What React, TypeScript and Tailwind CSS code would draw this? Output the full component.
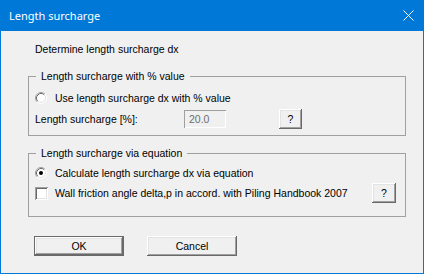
import React from "react";

const raised =
  "shadow-[inset_-1px_-1px_#696969,inset_1px_1px_#ffffff,inset_-2px_-2px_#a0a0a0,inset_2px_2px_#e3e3e3]";

function Radio({ checked }: { checked?: boolean }) {
  return (
    <svg width="12" height="12" viewBox="0 0 12 12" className="shrink-0">
      <circle cx="6" cy="6" r="5" fill="#fff" />
      <path d="M2.11 9.89A5.5 5.5 0 0 1 9.89 2.11" fill="none" stroke="#a0a0a0" />
      <path d="M9.89 2.11A5.5 5.5 0 0 1 2.11 9.89" fill="none" stroke="#ffffff" />
      <path d="M2.82 9.18A4.5 4.5 0 0 1 9.18 2.82" fill="none" stroke="#696969" />
      <path d="M9.18 2.82A4.5 4.5 0 0 1 2.82 9.18" fill="none" stroke="#e3e3e3" />
      {checked && <circle cx="6" cy="6" r="2" fill="#000" />}
    </svg>
  );
}

function HelpButton({ w }: { w: string }) {
  return (
    <button className={`${w} h-[20px] bg-[#f0f0f0] ${raised} flex items-center justify-center`}>
      ?
    </button>
  );
}

export default function App() {
  return (
    <div className="w-[424px] h-[274px] bg-[#f0f0f0] border-x border-b border-[#0078d7] flex flex-col text-[10.5px] leading-[13px] text-black font-['Liberation_Sans',Arial,sans-serif]">
      <div className="h-[31px] shrink-0 bg-[#0078d7] flex items-center justify-between pl-[8px] pr-[9px]">
        <span className="text-white text-[11px] font-['Noto_Sans',sans-serif]">Length surcharge</span>
        <svg width="11" height="11" viewBox="0 0 11 11">
          <path d="M0.5 0.5L10.5 10.5M10.5 0.5L0.5 10.5" stroke="#fff" strokeWidth="1" />
        </svg>
      </div>

      <div className="pl-[27px] pt-[12px] flex flex-col">
        <div className="pl-[7px]">Determine length surcharge dx</div>

        <fieldset className="mt-[14px] w-[378px] border border-[#a0a0a0] pl-[6px] pb-[6px]">
          <legend className="ml-[1px] px-[5px]">Length surcharge with % value</legend>
          <div className="mt-[7px] h-[16px] flex items-center gap-[8px]">
            <Radio />
            <span>Use length surcharge dx with % value</span>
          </div>
          <div className="mt-[3px] h-[20px] flex items-center">
            <span className="w-[149px]">Length surcharge [%]:</span>
            <div className="w-[42px] h-[18px] bg-[#f0f0f0] text-[#6d6d6d] pl-[5px] flex items-center shadow-[inset_1px_1px_#a0a0a0,inset_-1px_-1px_#ffffff]">
              20.0
            </div>
            <div className="ml-[53px]">
              <HelpButton w="w-[23px]" />
            </div>
          </div>
        </fieldset>

        <fieldset className="mt-[11px] w-[378px] border border-[#a0a0a0] pl-[6px] pr-[9px] pb-[13px]">
          <legend className="ml-[1px] px-[5px]">Length surcharge via equation</legend>
          <div className="mt-[5px] h-[16px] flex items-center gap-[8px]">
            <Radio checked />
            <span>Calculate length surcharge dx via equation</span>
          </div>
          <div className="mt-[2px] h-[20px] flex items-center">
            <div className="w-[13px] h-[13px] bg-white shadow-[inset_1px_1px_#a0a0a0,inset_-1px_-1px_#ffffff,inset_2px_2px_#696969,inset_-2px_-2px_#e3e3e3]" />
            <span className="ml-[7px]">Wall friction angle delta,p in accord. with Piling Handbook 2007</span>
            <div className="ml-auto">
              <HelpButton w="w-[24px]" />
            </div>
          </div>
        </fieldset>

        <div className="mt-[19px] ml-[6px] flex gap-[23px]">
          <button className={`w-[90px] h-[20px] border border-[#696969] bg-[#f0f0f0] ${raised}`}>OK</button>
          <button className={`w-[90px] h-[20px] bg-[#f0f0f0] ${raised}`}>Cancel</button>
        </div>
      </div>
    </div>
  );
}
